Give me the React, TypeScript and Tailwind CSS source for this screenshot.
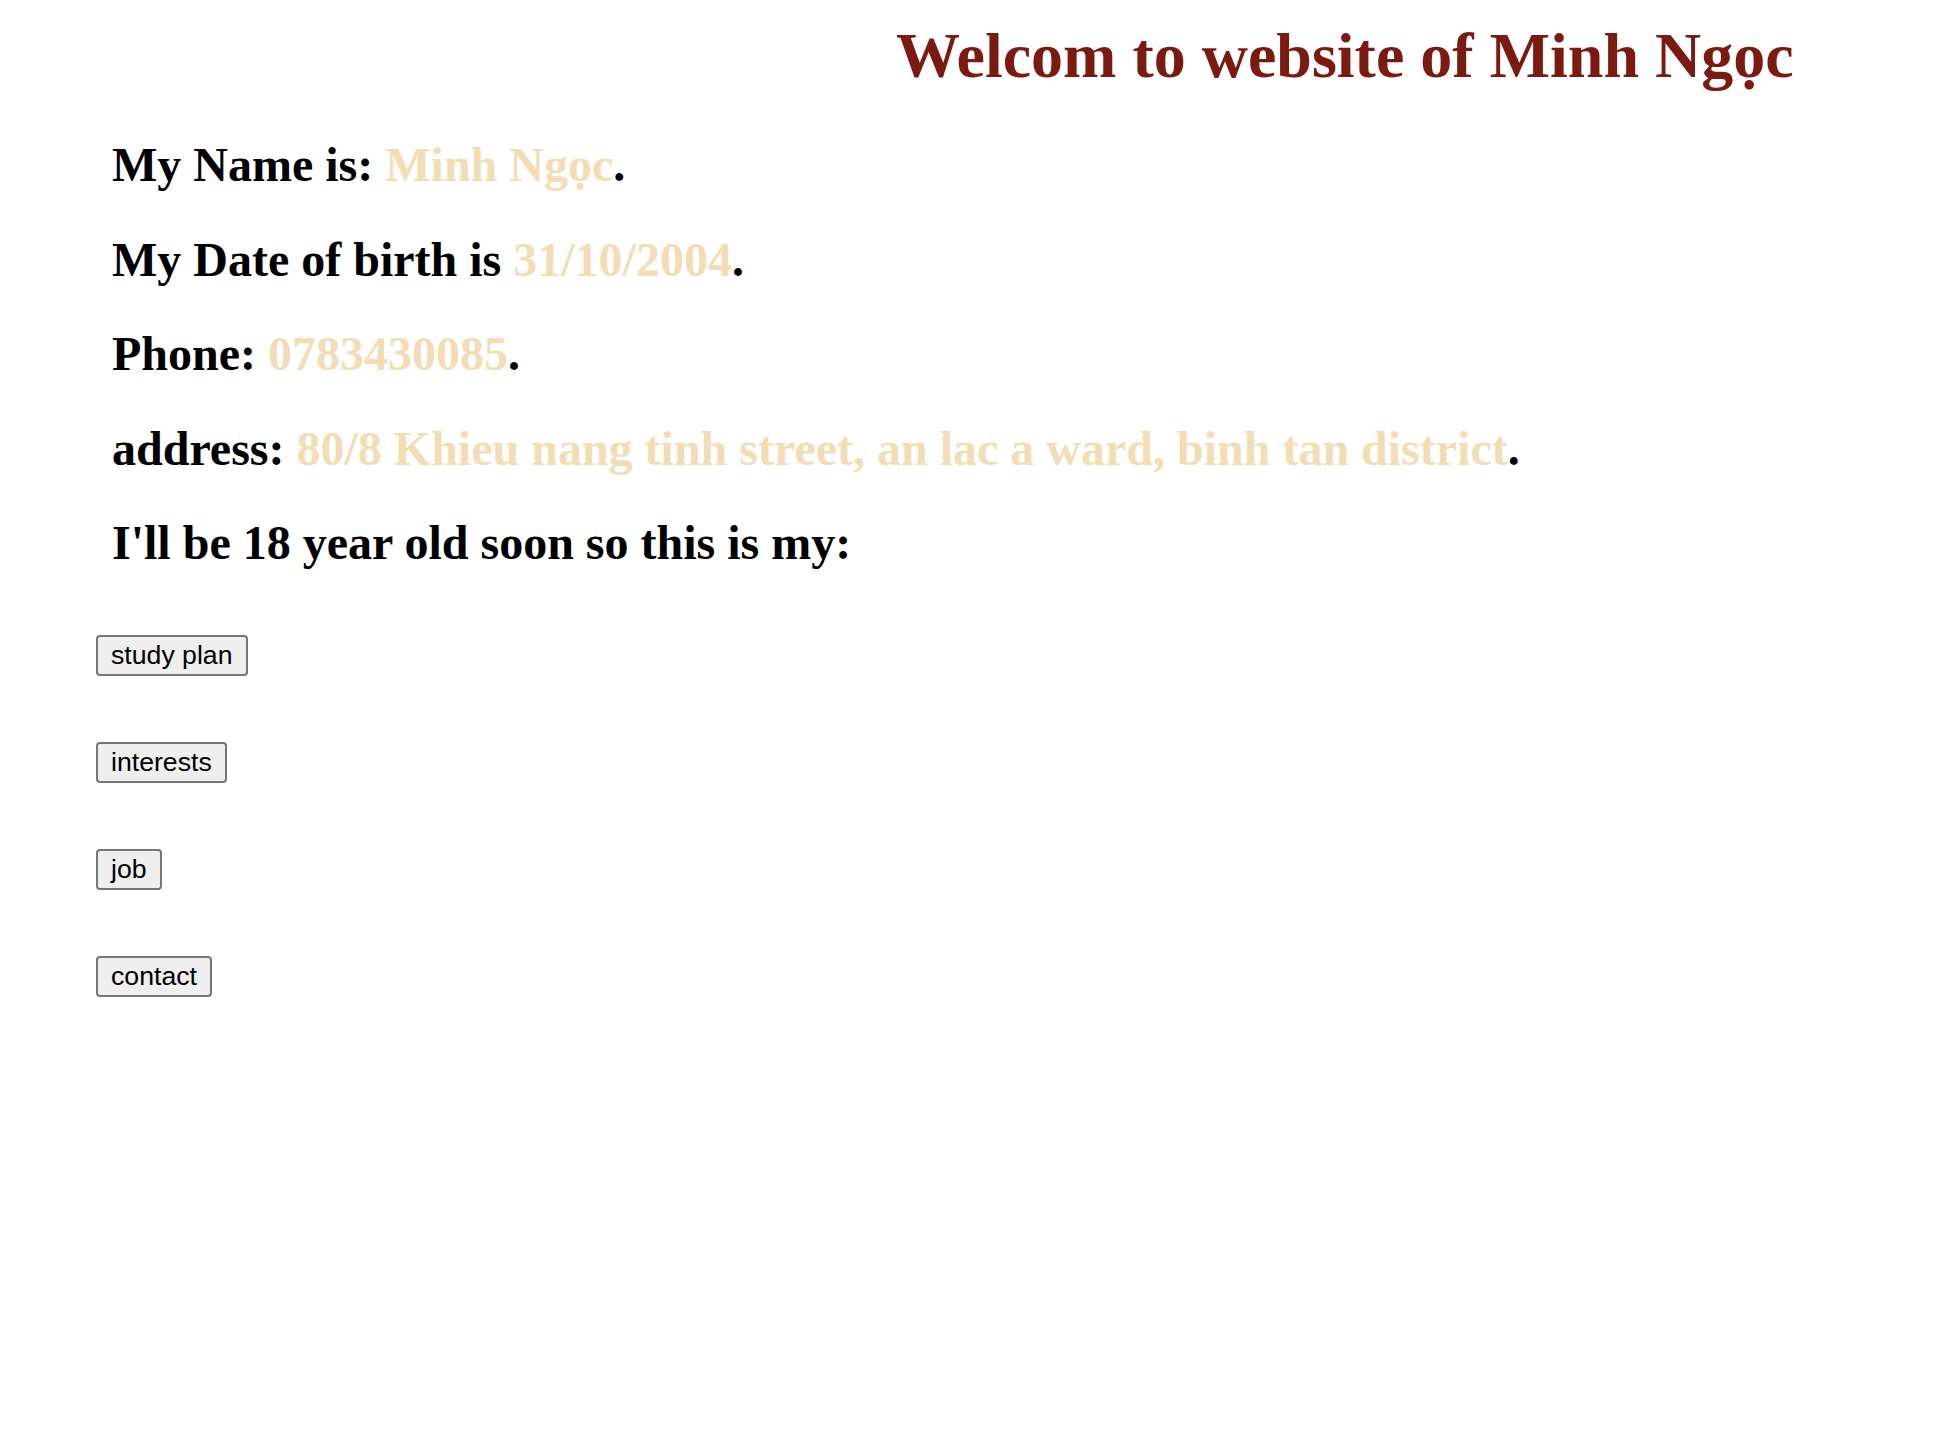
import React from "react";

const serif = { fontFamily: '"Liberation Serif", "Times New Roman", serif' };

export default function App() {
  const lines: { label: string; value?: string; end?: string }[] = [
    { label: "My Name is: ", value: "Minh Ngọc", end: "." },
    { label: "My Date of birth is ", value: "31/10/2004", end: "." },
    { label: "Phone: ", value: "0783430085", end: "." },
    { label: "address: ", value: "80/8 Khieu nang tinh street, an lac a ward, binh tan district", end: "." },
    { label: "I'll be 18 year old soon so this is my:" },
  ];
  const buttons = ["study plan", "interests", "job", "contact"];
  return (
    <div className="min-h-[1456px] w-full bg-white text-black">
      <h1
        className="pl-[896px] pt-[20px] text-[64px] leading-[72px] font-bold text-[#7b1a10] whitespace-nowrap"
        style={serif}
      >
        Welcom to website of Minh Ngọc
      </h1>
      <div className="mt-[45px] pl-[112px] flex flex-col gap-[38.5px]" style={serif}>
        {lines.map((l, i) => (
          <h2 key={i} className="text-[48px] leading-[56px] font-bold whitespace-nowrap">
            {l.label}
            {l.value && <span className="text-[#f3ddb5]">{l.value}</span>}
            {l.end}
          </h2>
        ))}
      </div>
      <div className="mt-[64px] pl-[96px] flex flex-col items-start gap-[66px]">
        {buttons.map((b) => (
          <button
            key={b}
            className="border-2 border-[#767676] bg-[#efefef] rounded-[4px] px-[13px] py-[3px] text-[26.67px] leading-[31px] text-black"
            style={{ fontFamily: '"Liberation Sans", Arial, sans-serif' }}
          >
            {b}
          </button>
        ))}
      </div>
    </div>
  );
}
